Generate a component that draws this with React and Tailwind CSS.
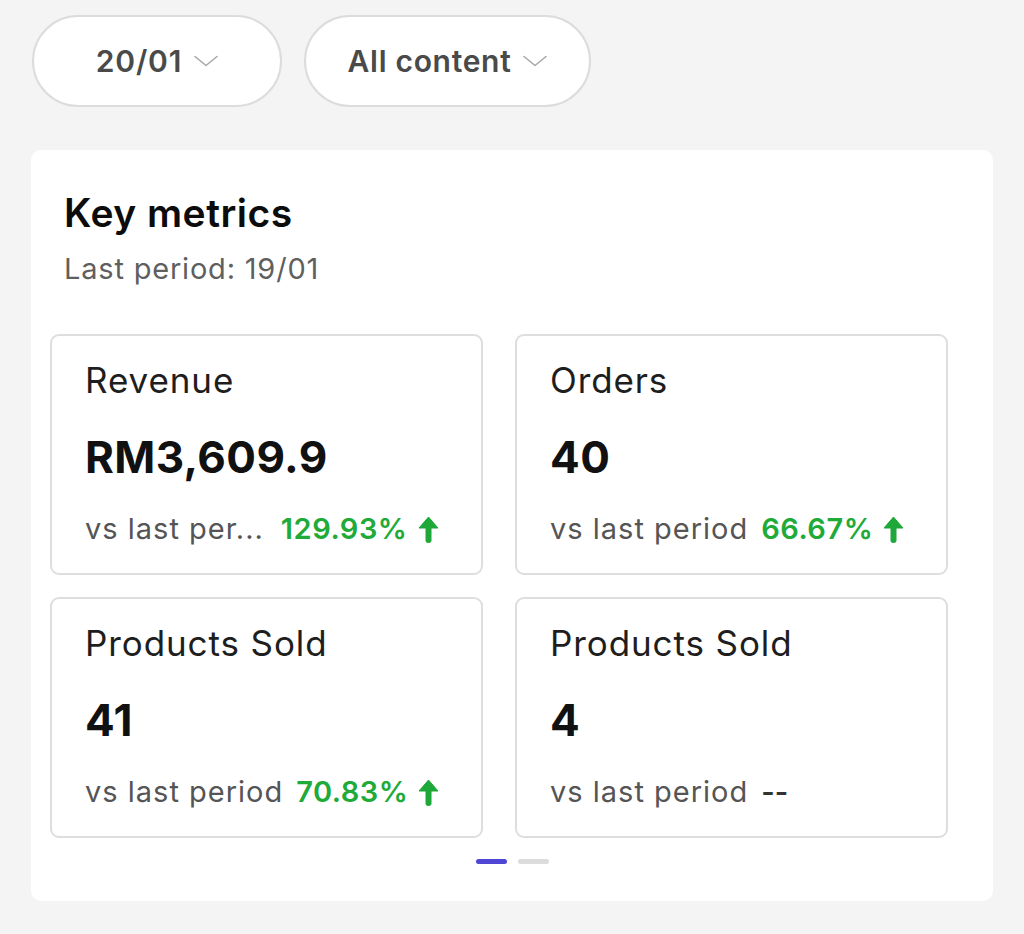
import React from 'react';

const font = { fontFamily: 'Inter, "Noto Sans", sans-serif' };

function Chevron() {
    return (
        <svg width="24" height="12" viewBox="0 0 24 12" fill="none" className="shrink-0">
            <path d="M1 1.5 L12 10.5 L23 1.5" stroke="#a8a8a8" strokeWidth="1.6" strokeLinecap="round" strokeLinejoin="round" />
        </svg>
    );
}

function UpArrow() {
    return (
        <svg width="21" height="27" viewBox="0 0 21 27" className="shrink-0">
            <path d="M10.5 1 L20 12 L13 12 L13 25 Q13 26.5 10.5 26.5 Q8 26.5 8 25 L8 12 L1 12 Z" fill="#1ea83a" strokeLinejoin="round" stroke="#1ea83a" strokeWidth="1" />
        </svg>
    );
}

const metrics = [
    { label: 'Revenue', value: 'RM3,609.9', vs: 'vs last per...', change: '129.93%', gap: 'gap-[17px]' },
    { label: 'Orders', value: '40', vs: 'vs last period', change: '66.67%', gap: 'gap-[13px]' },
    { label: 'Products Sold', value: '41', vs: 'vs last period', change: '70.83%', gap: 'gap-[13px]' },
    { label: 'Products Sold', value: '4', vs: 'vs last period', change: null, gap: 'gap-[13px]' },
];

function MetricCard({ metric }) {
    return (
        <div className="w-[433px] h-[241px] rounded-[9px] border-2 border-[#dedede] bg-white pl-[33px] pt-[22px]">
            <div className="text-[35px] leading-[44px] text-[#1e1e1e] tracking-[0.9px]">{metric.label}</div>
            <div className="mt-[29px] text-[44px] leading-[52px] font-bold text-[#111] tracking-[0.4px]">{metric.value}</div>
            <div className={`mt-[26px] flex items-center ${metric.gap} text-[29px] leading-[40px]`}>
                <span className="text-[#555] tracking-[1px]">{metric.vs}</span>
                {metric.change ? (
                    <span className="flex items-center gap-[10px]">
                        <span className="font-semibold text-[#20aa38] tracking-[0.5px]">{metric.change}</span>
                        <UpArrow />
                    </span>
                ) : (
                    <span className="font-semibold text-[#333]">--</span>
                )}
            </div>
        </div>
    );
}

export default function App() {
    return (
        <div className="w-[1024px] h-[934px] bg-[#f4f4f4] overflow-hidden" style={font}>
            {/* Filters */}
            <div className="flex gap-[22px] pl-[32px] pt-[15px]">
                <button className="w-[250px] h-[92px] rounded-full border-2 border-[#dcdcdc] bg-white flex items-center justify-center gap-[12px]">
                    <span className="text-[30px] font-semibold text-[#4a4a4a] tracking-[0.8px]">20/01</span>
                    <Chevron />
                </button>
                <button className="w-[287px] h-[92px] rounded-full border-2 border-[#dcdcdc] bg-white flex items-center justify-center gap-[12px]">
                    <span className="text-[30px] font-semibold text-[#4a4a4a] tracking-[0.7px]">All content</span>
                    <Chevron />
                </button>
            </div>

            {/* Key metrics */}
            <div className="ml-[31px] mt-[43px] w-[962px] h-[751px] rounded-[10px] bg-white pt-[38px]">
                <div className="pl-[33px]">
                    <h1 className="text-[39px] leading-[50px] font-semibold text-[#0c0c0c] tracking-[0.5px]">Key metrics</h1>
                    <div className="mt-[11px] text-[29px] leading-[40px] text-[#5f5f5f] tracking-[0.8px]">Last period: 19/01</div>
                </div>
                <div className="mt-[45px] pl-[19px] grid grid-cols-[433px_433px] gap-x-[32px] gap-y-[22px]">
                    {metrics.map((m, i) => (
                        <MetricCard key={i} metric={m} />
                    ))}
                </div>
                <div className="mt-[21px] flex justify-center gap-[11px]">
                    <div className="w-[31px] h-[5px] rounded-full bg-[#4f46d6]" />
                    <div className="w-[31px] h-[5px] rounded-full bg-[#dcdcdc]" />
                </div>
            </div>
        </div>
    );
}
